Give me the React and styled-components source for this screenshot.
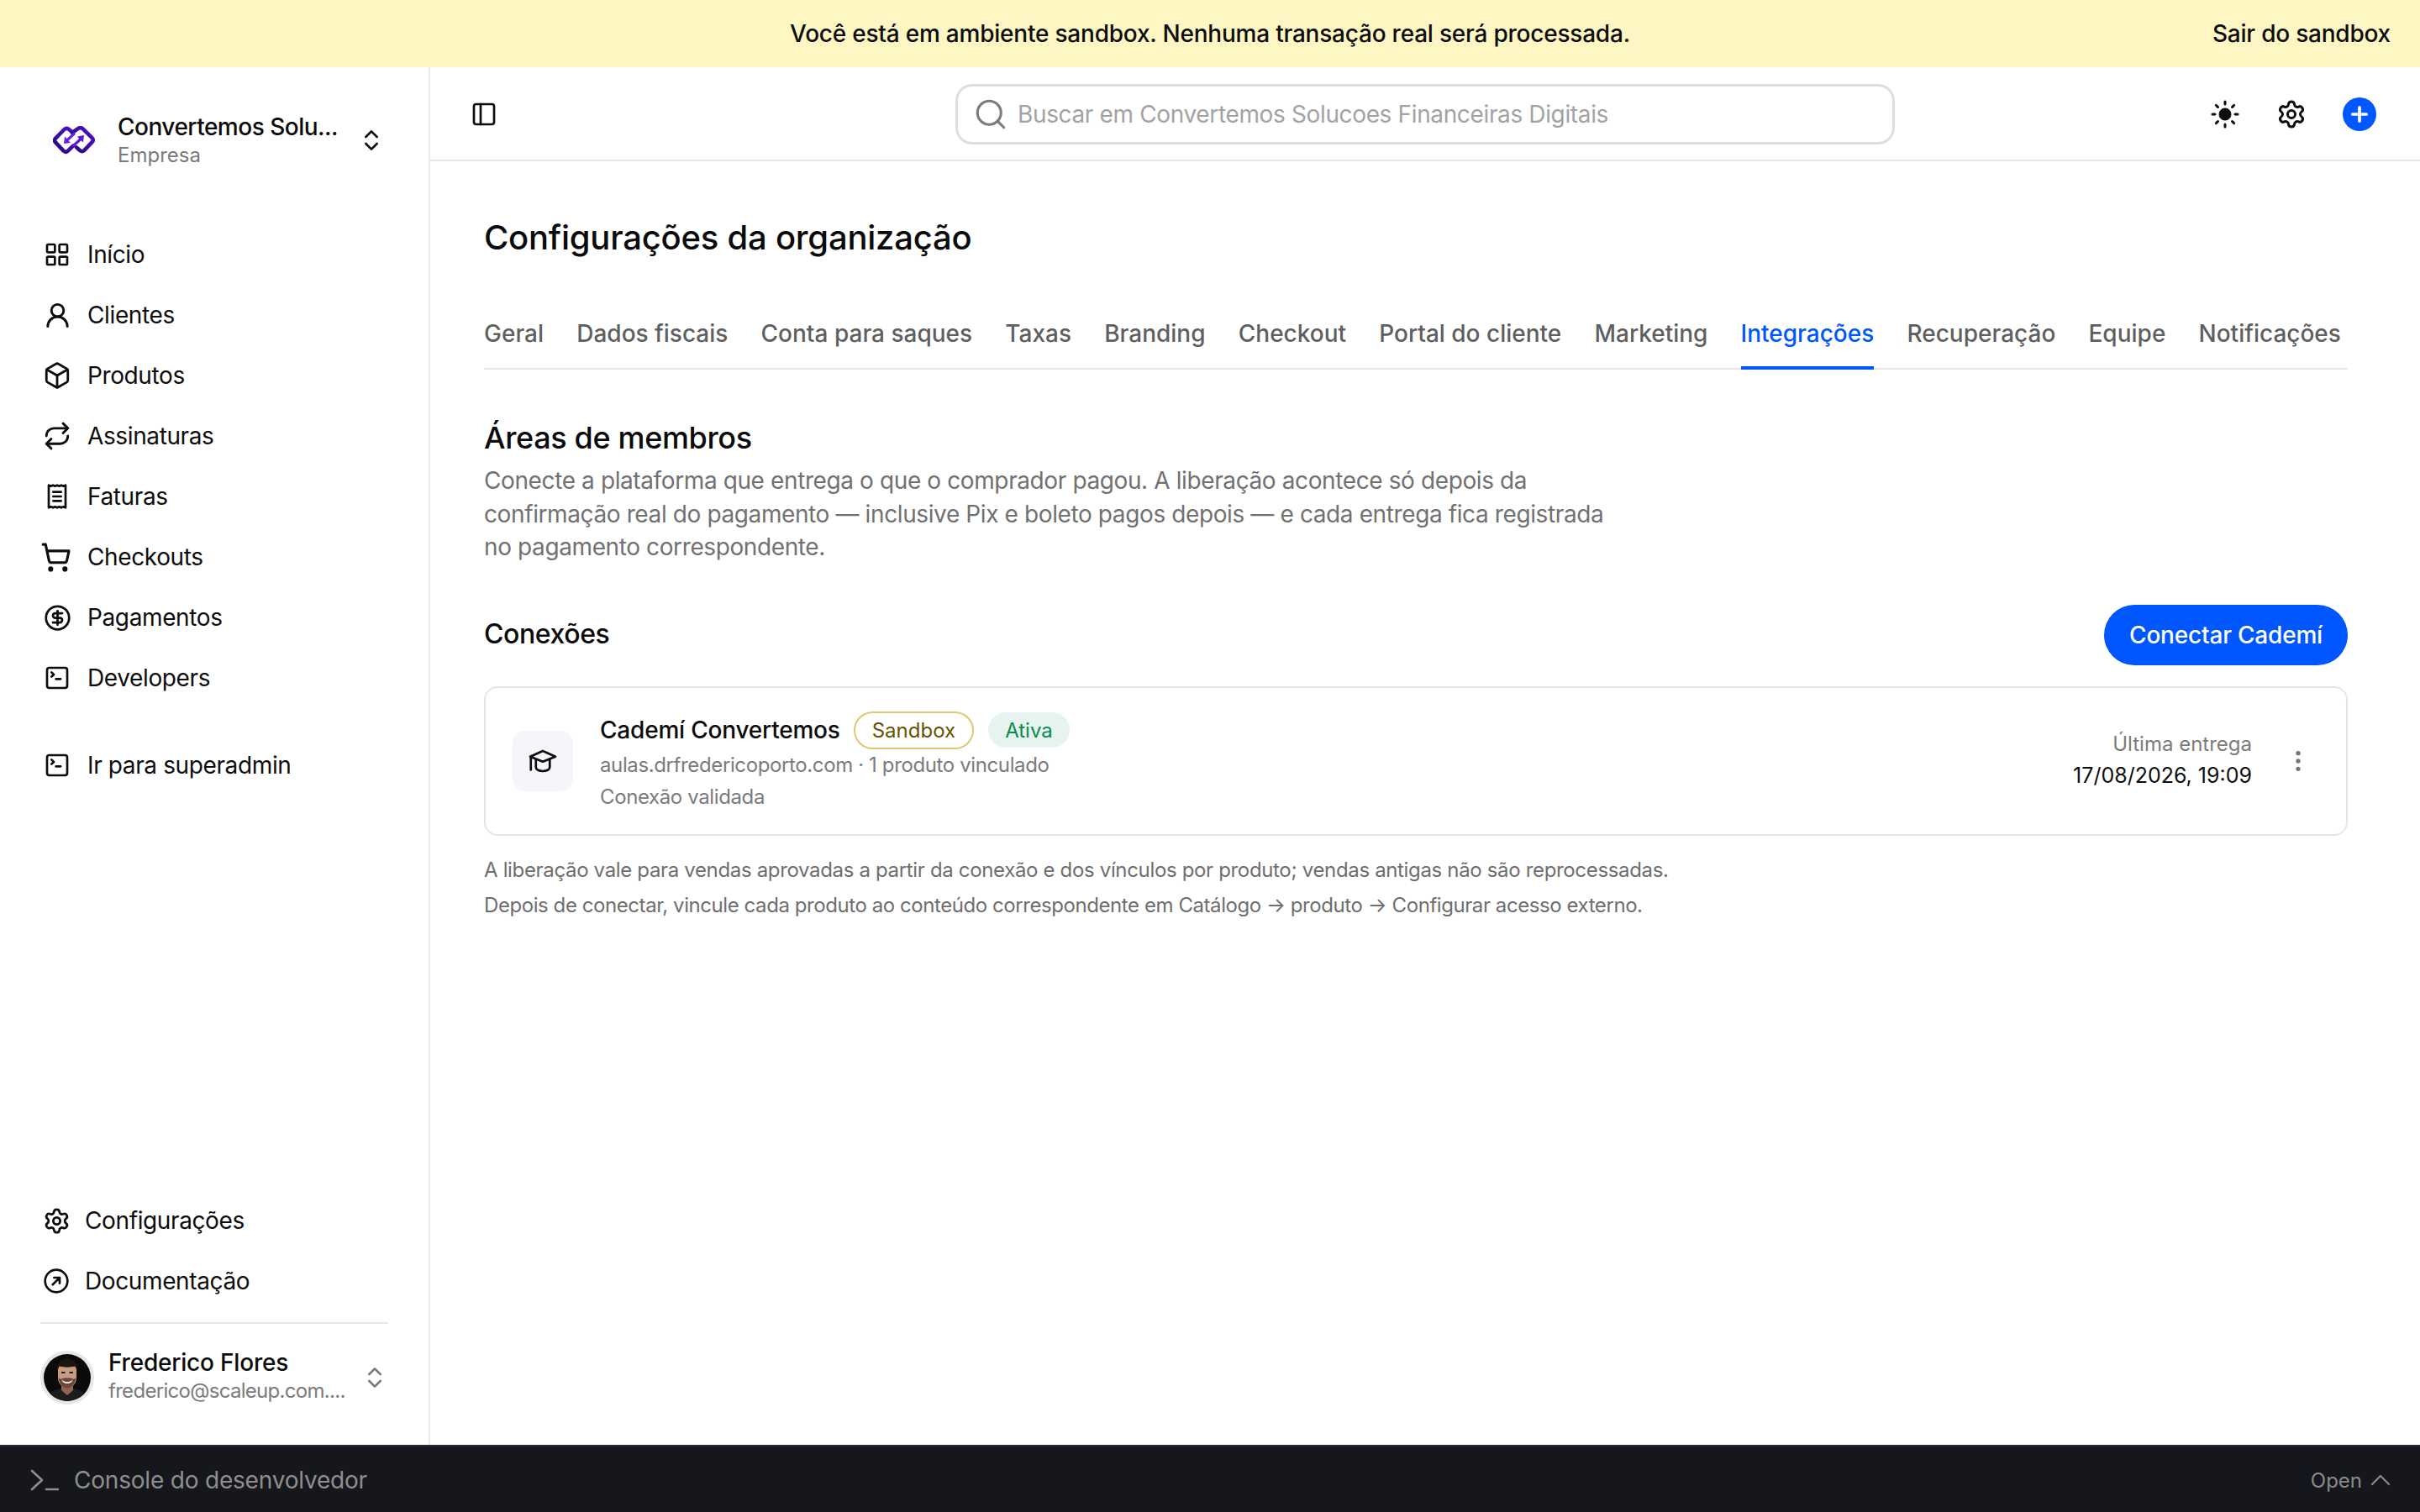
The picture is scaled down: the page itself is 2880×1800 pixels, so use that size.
import React from "react";
import styled, { createGlobalStyle } from "styled-components";
import {
  LayoutGrid, UserRound, Box, ShoppingCart, CircleDollarSign, SquareTerminal,
  Settings, ChevronsUpDown, PanelLeft, Search, Sun, EllipsisVertical, Plus, ChevronUp,
} from "lucide-react";

const Global = createGlobalStyle`
  html, body { margin: 0; padding: 0; background: #fff; }
  body { font-family: Inter, "Noto Sans", sans-serif; color: #0b0b0b; -webkit-font-smoothing: antialiased; }
  * { box-sizing: border-box; }
`;

const Page = styled.div`
  width: 2880px; height: 1800px; display: flex; flex-direction: column; overflow: hidden;
`;
const Banner = styled.div`
  height: 80px; flex: none; background: #fef7c3; display: grid; grid-template-columns: 1fr auto 1fr;
  align-items: center; padding: 0 35px; font-size: 28px; font-weight: 500; color: #0d0d0d; letter-spacing: -0.22px;
`;
const BannerLink = styled.span`
  justify-self: end;
`;
const Body = styled.div`
  flex: 1; display: flex; min-height: 0;
`;
const Sidebar = styled.aside`
  width: 512px; flex: none; border-right: 2px solid #e8e8e8; display: flex; flex-direction: column;
  padding: 53px 48px 48px 48px;
`;
const OrgRow = styled.div`
  display: flex; align-items: center; height: 68px; padding-left: 15px;
`;
const OrgText = styled.div`
  margin: 0 23px 0 27px; width: 263px; display: flex; flex-direction: column;
`;
const OrgName = styled.div`
  font-size: 28px; line-height: 36px; font-weight: 500; letter-spacing: -0.5px; white-space: nowrap;
`;
const SubText = styled.div`
  font-size: 24px; line-height: 32px; color: #7b7b7b; letter-spacing: ${p => p.$tight ? -0.7 : 0}px; white-space: nowrap;
`;
const Nav = styled.nav`
  display: flex; flex-direction: column; margin-top: 66px;
`;
const NavItem = styled.div`
  height: 72px; display: flex; align-items: center; gap: ${p => p.$gap ?? 20}px; padding-left: ${p => p.$pad ?? 4}px;
  margin-top: ${p => p.$top ?? 0}px; font-size: 28px; color: #0d0d0d; letter-spacing: -0.38px;
`;
const IconSlot = styled.span`
  width: 32px; height: 32px; flex: none; display: flex; align-items: center; justify-content: center; color: ${p => p.$muted ? "#7b7b7b" : "#0d0d0d"};
  svg { flex: none; }
`;
const CartIcon = styled(ShoppingCart)`
  margin-left: -3px;
`;
const Spacer = styled.div`flex: 1;`;
const Divider = styled.div`
  height: 2px; background: #e6e6e6; margin-top: 13px;
`;
const UserRow = styled.div`
  display: flex; align-items: center; margin-top: 32px; height: 64px;
`;
const Avatar = styled.div`
  width: 64px; height: 64px; border-radius: 50%; border: 4px solid #e7e7e7; overflow: hidden; flex: none;
  svg { display: block; }
`;
const UserText = styled.div`
  margin: 0 20px 0 17px; width: 281px; display: flex; flex-direction: column;
`;
const UserName = styled.div`
  font-size: 28px; line-height: 36px; font-weight: 500; margin-top: -4px; letter-spacing: -0.2px;
`;
const Main = styled.main`
  flex: 1; min-width: 0; display: flex; flex-direction: column;
`;
const Header = styled.header`
  height: 112px; flex: none; border-bottom: 2px solid #e6e6e6; display: grid; grid-template-columns: 1fr 1118px 1fr;
  align-items: center; padding: 2px 52px 0;
`;
const ToggleSlot = styled.span`
  margin-left: -4px; display: flex; color: #0d0d0d;
`;
const SearchBox = styled.div`
  height: 72px; border: 3px solid #dedede; border-radius: 20px; display: flex; align-items: center; gap: 11px; padding-left: 18px;
  font-size: 28px; color: #a3a3a3; letter-spacing: -0.36px;
`;
const HeaderActions = styled.div`
  display: flex; justify-content: flex-end; align-items: center; gap: 43px; color: #0d0d0d;
`;
const PlusButton = styled.span`
  width: 40px; height: 40px; border-radius: 50%; background: #0057ff; color: #fff; display: flex; align-items: center; justify-content: center;
`;
const Content = styled.div`
  flex: 1; padding: 65px 86px 0 64px;
`;
const Title = styled.h1`
  margin: 0; font-size: 40px; line-height: 52px; font-weight: 500; color: #0b0b0b; letter-spacing: -0.23px;
`;
const Tabs = styled.div`
  display: flex; justify-content: space-between; border-bottom: 2px solid #e6e6e6; margin-top: 70px; padding-right: 8px;
`;
const Tab = styled.div`
  font-size: 28px; line-height: 36px; font-weight: 500; padding-bottom: 21px; margin-bottom: -2px;
  border-bottom: 4px solid ${p => (p.$active ? "#0057ff" : "transparent")};
  color: ${p => (p.$active ? "#0057ff" : "#5f5f5f")};
`;
const SectionTitle = styled.h2`
  margin: 58px 0 0; font-size: 36px; line-height: 46px; font-weight: 500; letter-spacing: -0.35px;
`;
const Description = styled.p`
  margin: 9px 0 0; width: 1350px; font-size: 28px; line-height: 39.5px; color: #717171; letter-spacing: -0.39px;
`;
const ConnectionsRow = styled.div`
  display: flex; justify-content: space-between; align-items: center; margin-top: 48px;
`;
const SubTitle = styled.h3`
  margin: 0; font-size: 32px; font-weight: 500; line-height: 40px; margin-top: -2px; letter-spacing: -0.4px;
`;
const PrimaryButton = styled.button`
  height: 72px; width: 290px; border: 0; border-radius: 36px; background: #0057ff; color: #fff; font: 500 28px Inter, sans-serif; letter-spacing: -0.2px;
`;
const Card = styled.div`
  margin-top: 25px; height: 178px; border: 2px solid #e6e6e6; border-radius: 16px; display: flex; align-items: center; padding: 0 37px 0 32px;
`;
const CardIcon = styled.div`
  width: 72px; height: 72px; border-radius: 14px; background: #f5f6fa; display: flex; align-items: center; justify-content: center; flex: none; color: #0d0d0d;
`;
const CardBody = styled.div`
  margin-left: 32px; flex: 1; display: flex; flex-direction: column; padding-top: 3px;
`;
const CardTitleRow = styled.div`
  display: flex; align-items: center; height: 45px;
`;
const CardTitle = styled.span`
  font-size: 28px; font-weight: 500; margin-right: 16px; letter-spacing: -0.2px;
`;
const Badge = styled.span`
  height: ${p => (p.$outline ? 45 : 42)}px; padding: 0 20px; border-radius: 23px; display: flex; align-items: center;
  font-size: 24px; font-weight: 400; margin-right: 17px;
  border: ${p => (p.$outline ? "2px solid #dfc86e" : "0")};
  background: ${p => (p.$outline ? "#fff" : "#e6f3ee")};
  color: ${p => (p.$outline ? "#675200" : "#0b8a4e")};
`;
const CardLine = styled.div`
  font-size: 24px; line-height: 38px; color: #7b7b7b; letter-spacing: -0.38px;
  &:first-of-type { margin-top: 8px; }
`;
const CardMeta = styled.div`
  text-align: right; margin-top: -3px;
`;
const MetaLabel = styled.div`
  font-size: 24px; line-height: 37px; color: #7b7b7b;
`;
const MetaValue = styled.div`
  font-size: 25px; line-height: 37px; color: #0d0d0d; margin-top: 1px;
`;
const Kebab = styled.span`
  width: 40px; height: 40px; margin-left: 35px; color: #757575; display: flex; align-items: center; justify-content: center; flex: none;
`;
const Notes = styled.div`
  margin-top: 20px;
`;
const NoteLine = styled.div`
  font-size: 24px; line-height: 42px; color: #6e6e6e; letter-spacing: ${p => p.$spacing}px;
`;
const DevBar = styled.footer`
  height: 80px; flex: none; background: #16171c; border-top: 2px solid #282930; display: flex; align-items: center; justify-content: space-between;
  padding: 2px 27px 0 36px; color: #8f8f8f; font-size: 28px; letter-spacing: -0.2px;
`;
const DevLeft = styled.div`
  display: flex; align-items: center; gap: 18px;
`;
const DevRight = styled.div`
  display: flex; align-items: center; gap: 2px; font-size: 24px; color: #8b8b8b; letter-spacing: 0;
`;

const RepeatIcon = () => (
  <svg width="34" height="34" viewBox="0 0 24 24" fill="none" stroke="currentColor" strokeWidth="2" strokeLinecap="round" strokeLinejoin="round">
    <path d="M3 12C3 8 6 5.500 9.500 5.500H21" />
    <path d="M17 1.500l4 4-4 4" />
    <path d="M21 12C21 16 18 18.500 14.500 18.500H3" />
    <path d="M7 22.500l-4-4 4-4" />
  </svg>
);
const ReceiptIcon = () => (
  <svg width="32" height="32" viewBox="0 0 24 24" fill="none" stroke="currentColor" strokeWidth="2" strokeLinejoin="round" strokeLinecap="round">
    <path d="M4.500 2v20l1.900-.8 1.900.8 1.800-.8 1.900.8 1.900-.8 1.800.8 1.900-.8 1.900.8V2l-1.900.8-1.900-.8-1.800.8-1.900-.8-1.900.8-1.800-.8-1.900.8Z" />
    <path d="M8.500 8h7M8.500 12h7M8.500 16h7" />
  </svg>
);
const DocIcon = () => (
  <svg width="32" height="32" viewBox="0 0 24 24" fill="none" stroke="currentColor" strokeWidth="2" strokeLinecap="round" strokeLinejoin="round">
    <circle cx="12" cy="12" r="10" />
    <path d="M8.800 15.200 15 9M10 9h5v5" />
  </svg>
);
const CapIcon = () => (
  <svg width="36" height="36" viewBox="0 0 24 24" fill="none" stroke="currentColor" strokeWidth="1.8" strokeLinecap="round" strokeLinejoin="round">
    <path d="M12 4 22 8.500 12 12.500 2 8.500Z" />
    <path d="M6.500 11v6c0 1.800 2.500 3 5.500 3s5.500-1.200 5.500-3v-6" />
    <path d="M2.500 9v10" />
  </svg>
);
const ConsoleIcon = () => (
  <svg width="34" height="26" viewBox="0 0 34 26" fill="none" stroke="currentColor" strokeWidth="2.6" strokeLinecap="round" strokeLinejoin="round">
    <path d="M2 2 14 13 2 24" />
    <path d="M19 24H33" />
  </svg>
);
const Logo = () => (
  <svg width="50" height="34" viewBox="0 0 50 34" fill="none" style={{ flex: "none" }}>
    <defs>
      <linearGradient id="lg" x1="0" y1="1" x2="1" y2="0">
        <stop offset="0" stopColor="#250880" />
        <stop offset="1" stopColor="#4f12c8" />
      </linearGradient>
    </defs>
    <path d="M22 6.500 18.500 3.600Q16 2 13.600 4L3.200 14.600Q1 17.200 3.200 19.600L12.400 29.400Q15.200 32 17.800 29.600L24 23.600" stroke="url(#lg)" strokeWidth="4.600" strokeLinecap="round" strokeLinejoin="round" />
    <path d="M22.800 8 29.800 3.200Q32.600 1 35.400 3.200L46.600 14.200Q48.800 16.800 46.600 19.200L37.400 28.800Q34.800 31.400 32 29L28 25.400" stroke="url(#lg)" strokeWidth="4.600" strokeLinecap="round" strokeLinejoin="round" />
    <path d="M13 21 14 12.600 16.400 15 25 7.500 27 9.800 18.600 17.600 21 20Z" fill="#6a1fe6" />
    <path d="M37 11 36 19.600 33.600 17.200 25 25 23 22.600 31.200 15 29 12.600Z" fill="#5a17d6" />
  </svg>
);
const Portrait = () => (
  <svg width="56" height="56" viewBox="0 0 56 56">
    <defs><filter id="soft"><feGaussianBlur stdDeviation="0.6" /></filter></defs>
    <rect width="56" height="56" fill="#0b0a09" />
    <g filter="url(#soft)">
      <path d="M2 56c1-9 9-13 18-15l8 6 8-6c9 2 17 6 18 15Z" fill="#1f1e1d" />
      <path d="M21 32h14v11l-7 6-7-6Z" fill="#8f6650" />
      <path d="M17 19c0-7 5-10.500 11-10.500S39 12 39 19v9c0 7-5 12-11 12S17 35 17 28Z" fill="#c99c82" />
      <path d="M17.500 28c1 7 5 12.500 10.500 12.500S37.500 35 38.500 28c-1.500 2-3.500 2-5 1-3-1-8-1-11 0-1.500 1-3.500 1-5-1Z" fill="#6a4a3a" />
      <path d="M21.500 30.500c4 3.500 9 3.500 13 0-1 6-12 6-13 0Z" fill="#f4efe9" />
      <path d="M16 22c-1.500-10 4-16.500 12-16.500S41.500 12 40 22c-.5-3-1.500-6-3-7.500-5 1.500-13 1.500-18 0-1.500 1.500-2.500 4.500-3 7.500Z" fill="#1d1611" />
      <path d="M21 22h4.500M30.500 22H35" stroke="#2a1c14" strokeWidth="1.800" />
    </g>
  </svg>
);

const mainNav = [
  ["Início", <LayoutGrid size={32} />],
  ["Clientes", <UserRound size={35} />],
  ["Produtos", <Box size={34} />],
  ["Assinaturas", <RepeatIcon />],
  ["Faturas", <ReceiptIcon />],
  ["Checkouts", <CartIcon size={37} />],
  ["Pagamentos", <CircleDollarSign size={33} />],
  ["Developers", <SquareTerminal size={32} />],
];
const tabs = ["Geral", "Dados fiscais", "Conta para saques", "Taxas", "Branding", "Checkout", "Portal do cliente", "Marketing", "Integrações", "Recuperação", "Equipe", "Notificações"];

export default function App() {
  return (
    <Page>
      <Global />
      <Banner>
        <span />
        <span>Você está em ambiente sandbox. Nenhuma transação real será processada.</span>
        <BannerLink>Sair do sandbox</BannerLink>
      </Banner>
      <Body>
        <Sidebar>
          <OrgRow>
            <Logo />
            <OrgText>
              <OrgName>Convertemos Solu...</OrgName>
              <SubText>Empresa</SubText>
            </OrgText>
            <IconSlot><ChevronsUpDown size={32} /></IconSlot>
          </OrgRow>
          <Nav>
            {mainNav.map(([label, icon]) => (
              <NavItem key={label}><IconSlot>{icon}</IconSlot>{label}</NavItem>
            ))}
            <NavItem $top={32}><IconSlot><SquareTerminal size={32} /></IconSlot>Ir para superadmin</NavItem>
          </Nav>
          <Spacer />
          <NavItem $pad={3} $gap={18}><IconSlot><Settings size={33} /></IconSlot>Configurações</NavItem>
          <NavItem $pad={3} $gap={18}><IconSlot><DocIcon /></IconSlot>Documentação</NavItem>
          <Divider />
          <UserRow>
            <Avatar><Portrait /></Avatar>
            <UserText>
              <UserName>Frederico Flores</UserName>
              <SubText $tight>frederico@scaleup.com....</SubText>
            </UserText>
            <IconSlot $muted><ChevronsUpDown size={32} /></IconSlot>
          </UserRow>
        </Sidebar>
        <Main>
          <Header>
            <ToggleSlot><PanelLeft size={32} /></ToggleSlot>
            <SearchBox>
              <Search size={42} color="#7c7c7c" strokeWidth={1.8} />
              Buscar em Convertemos Solucoes Financeiras Digitais
            </SearchBox>
            <HeaderActions>
              <Sun size={36} fill="currentColor" strokeWidth={2} />
              <Settings size={36} strokeWidth={2} />
              <PlusButton><Plus size={28} strokeWidth={3.2} /></PlusButton>
            </HeaderActions>
          </Header>
          <Content>
            <Title>Configurações da organização</Title>
            <Tabs>
              {tabs.map(t => <Tab key={t} $active={t === "Integrações"}>{t}</Tab>)}
            </Tabs>
            <SectionTitle>Áreas de membros</SectionTitle>
            <Description>
              Conecte a plataforma que entrega o que o comprador pagou. A liberação acontece só depois da confirmação real do pagamento — inclusive Pix e boleto pagos depois — e cada entrega fica registrada no pagamento correspondente.
            </Description>
            <ConnectionsRow>
              <SubTitle>Conexões</SubTitle>
              <PrimaryButton>Conectar Cademí</PrimaryButton>
            </ConnectionsRow>
            <Card>
              <CardIcon><CapIcon /></CardIcon>
              <CardBody>
                <CardTitleRow>
                  <CardTitle>Cademí Convertemos</CardTitle>
                  <Badge $outline>Sandbox</Badge>
                  <Badge>Ativa</Badge>
                </CardTitleRow>
                <CardLine>aulas.drfredericoporto.com · 1 produto vinculado</CardLine>
                <CardLine>Conexão validada</CardLine>
              </CardBody>
              <CardMeta>
                <MetaLabel>Última entrega</MetaLabel>
                <MetaValue>17/08/2026, 19:09</MetaValue>
              </CardMeta>
              <Kebab><EllipsisVertical size={32} /></Kebab>
            </Card>
            <Notes>
              <NoteLine $spacing={-0.34}>A liberação vale para vendas aprovadas a partir da conexão e dos vínculos por produto; vendas antigas não são reprocessadas.</NoteLine>
              <NoteLine $spacing={-0.43}>Depois de conectar, vincule cada produto ao conteúdo correspondente em Catálogo → produto → Configurar acesso externo.</NoteLine>
            </Notes>
          </Content>
        </Main>
      </Body>
      <DevBar>
        <DevLeft><ConsoleIcon />Console do desenvolvedor</DevLeft>
        <DevRight>Open <ChevronUp size={40} strokeWidth={1.3} /></DevRight>
      </DevBar>
    </Page>
  );
}
